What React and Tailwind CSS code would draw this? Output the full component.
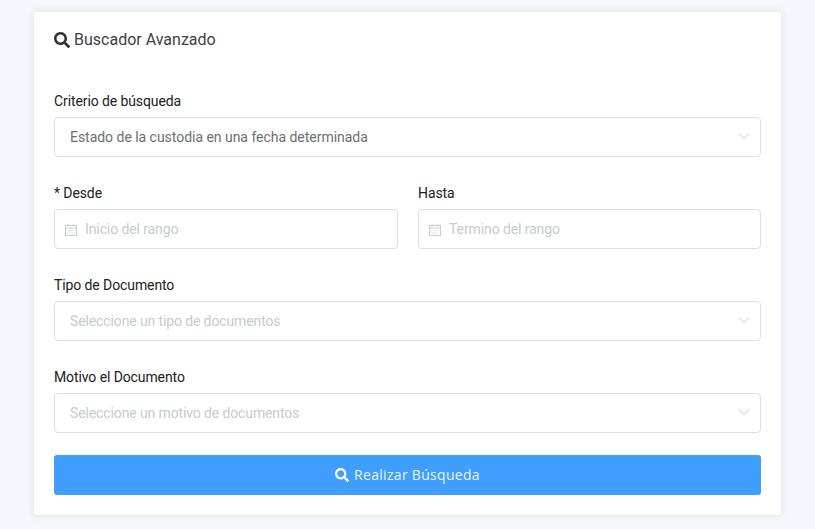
import React from "react";
import { FaSearch } from "react-icons/fa";

const Chevron = () => (
  <svg width="12" height="12" viewBox="0 0 12 12" fill="none" stroke="#c0c4cc" strokeWidth="1" className="shrink-0 -translate-y-[1px]">
    <path d="M1 3.5 L6 8.5 L11 3.5" />
  </svg>
);

const Calendar = () => (
  <svg width="14" height="14" viewBox="0 0 14 14" fill="none" stroke="#c8ccd3" strokeWidth="1" className="shrink-0 translate-y-[1px]">
    <rect x="1.5" y="2.5" width="11" height="10" />
    <path d="M1.5 5H12.5M4 1V3.5M10 1V3.5" />
    <path d="M3.5 7.5H10.5M3.5 10H10.5" strokeDasharray="1 1" />
  </svg>
);

const Label = ({ children }) => (
  <div className="h-[18px] leading-[18px] mb-[7px] text-[14px] text-[#212121] tracking-[-0.1px]">{children}</div>
);

const Select = ({ text, placeholder }) => (
  <div className="h-10 rounded border border-[#dcdfe6] bg-white pl-[15px] pr-[10px] flex items-center justify-between">
    <span className={"text-[14px] " + (placeholder ? "text-[#c6cad1] tracking-[-0.12px]" : "text-[#6c6e72] tracking-[-0.03px]")}>{text}</span>
    <Chevron />
  </div>
);

const DateInput = ({ text }) => (
  <div className="h-10 rounded border border-[#dcdfe6] bg-white pl-[9px] flex items-center gap-[7px]">
    <Calendar />
    <span className="text-[14px] text-[#c6cad1] tracking-[-0.1px]">{text}</span>
  </div>
);

export default function App() {
  return (
    <div className="h-[529px] overflow-hidden bg-[#f5f7fd] px-[34px] pt-[12px] font-['Roboto',sans-serif]">
      <div className="w-[747px] h-[503px] bg-white rounded-[3px] shadow-[0_0_10px_rgba(0,0,0,0.1)] px-5 pt-[18px]">
        <div className="flex items-center gap-[4px] h-5 text-[16px] text-[#3f4144]">
          <FaSearch size={16} className="text-[#303133]" />
          <span>Buscador Avanzado</span>
        </div>
        <div className="mt-[42px]">
          <Label>Criterio de búsqueda</Label>
          <Select text="Estado de la custodia en una fecha determinada" />
        </div>
        <div className="mt-[27px] grid grid-cols-[344px_343px] gap-x-5">
          <div>
            <Label>* Desde</Label>
            <DateInput text="Inicio del rango" />
          </div>
          <div>
            <Label>Hasta</Label>
            <DateInput text="Termino del rango" />
          </div>
        </div>
        <div className="mt-[27px]">
          <Label>Tipo de Documento</Label>
          <Select placeholder text="Seleccione un tipo de documentos" />
        </div>
        <div className="mt-[27px]">
          <Label>Motivo el Documento</Label>
          <Select placeholder text="Seleccione un motivo de documentos" />
        </div>
        <button className="mt-[22px] w-full h-10 rounded-[3px] bg-[#409eff] text-white flex items-center justify-center gap-[5px] text-[14px] leading-[18px] font-['Open_Sans',sans-serif] tracking-[0.3px]">
          <FaSearch size={14} />
          <span className="-translate-y-[0.5px] text-[#e8f3ff]">Realizar Búsqueda</span>
        </button>
      </div>
    </div>
  );
}
